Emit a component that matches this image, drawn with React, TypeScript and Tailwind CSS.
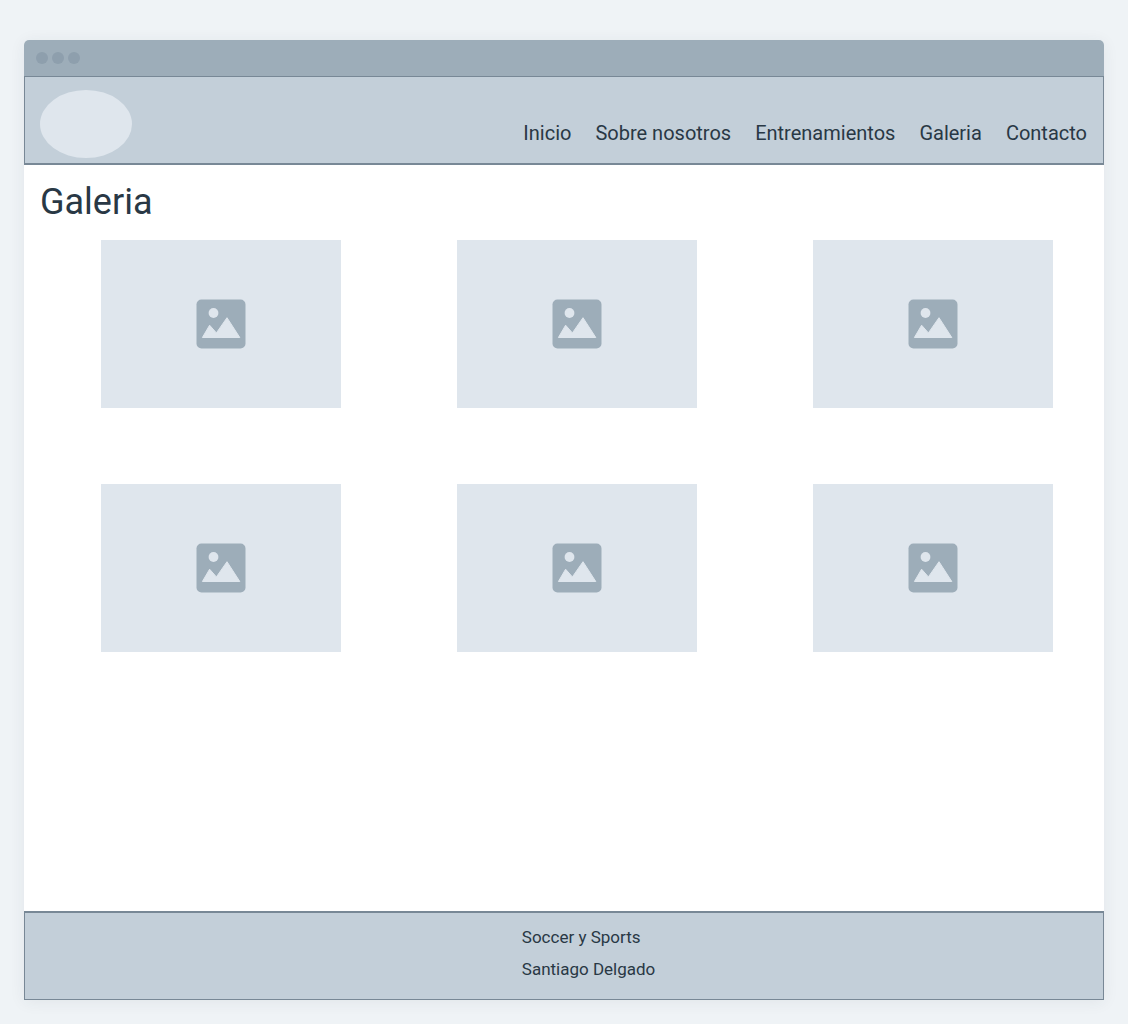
const navItems = ["Inicio", "Sobre nosotros", "Entrenamientos", "Galeria", "Contacto"];
const photos = [1, 2, 3, 4, 5, 6];

function PhotoPlaceholder({ label }: { label: string }) {
  return (
    <li className="flex aspect-[10/7] items-center justify-center bg-[#dfe6ed]">
      <svg role="img" aria-label={label} viewBox="0 0 50 50" className="size-[50px]">
        <rect x="0.5" y="0.5" width="49" height="49" rx="5" fill="#9dadb9" />
        <circle cx="17.5" cy="14" r="4.9" fill="#dfe6ed" />
        <path
          d="M6.4 38.5 L13.6 26.2 L20.4 33.9 L31 18.7 L43.8 38.5 Z"
          fill="#dfe6ed"
          stroke="#dfe6ed"
          strokeWidth="1"
          strokeLinejoin="round"
        />
      </svg>
    </li>
  );
}

export default function App() {
  return (
    <div className="flex min-h-screen flex-col bg-[#eff3f6] px-6 pt-10 pb-6 font-[Roboto,sans-serif] text-[#293845]">
      <div className="flex flex-1 flex-col rounded-t-[5px] bg-white shadow-[0_2px_16px_rgba(41,56,69,0.07)]">
        <div className="flex h-9 items-center gap-1 rounded-t-[5px] bg-[#9dadb9] px-3">
          <span className="size-3 rounded-full bg-[#8e9fad]" />
          <span className="size-3 rounded-full bg-[#8e9fad]" />
          <span className="size-3 rounded-full bg-[#8e9fad]" />
        </div>

        <header className="flex items-end justify-between border border-b-2 border-[#788896] bg-[#c3cfd9] pt-[13px] pr-4 pb-[5px] pl-[15px]">
          <div className="h-[68px] w-[92px] rounded-[50%] bg-[#dfe6ed]" />
          <nav className="pb-2.5">
            <ul className="flex gap-6 text-xl leading-[30px]">
              {navItems.map((item) => (
                <li key={item}>
                  <a href="#">{item}</a>
                </li>
              ))}
            </ul>
          </nav>
        </header>

        <main className="flex-1 pb-10">
          <h1 className="px-4 pt-4 text-4xl leading-[42px]">Galeria</h1>
          <ul className="mt-[17px] grid grid-cols-3 gap-x-[116px] gap-y-[76px] pr-[51px] pl-[77px]">
            {photos.map((n) => (
              <PhotoPlaceholder key={n} label={`Foto ${n}`} />
            ))}
          </ul>
        </main>

        <footer className="border border-t-2 border-[#788896] bg-[#c3cfd9] pt-2 pb-[14px] pl-[46%] text-[17px] leading-8">
          <p>Soccer y Sports</p>
          <p>Santiago Delgado</p>
        </footer>
      </div>
    </div>
  );
}
